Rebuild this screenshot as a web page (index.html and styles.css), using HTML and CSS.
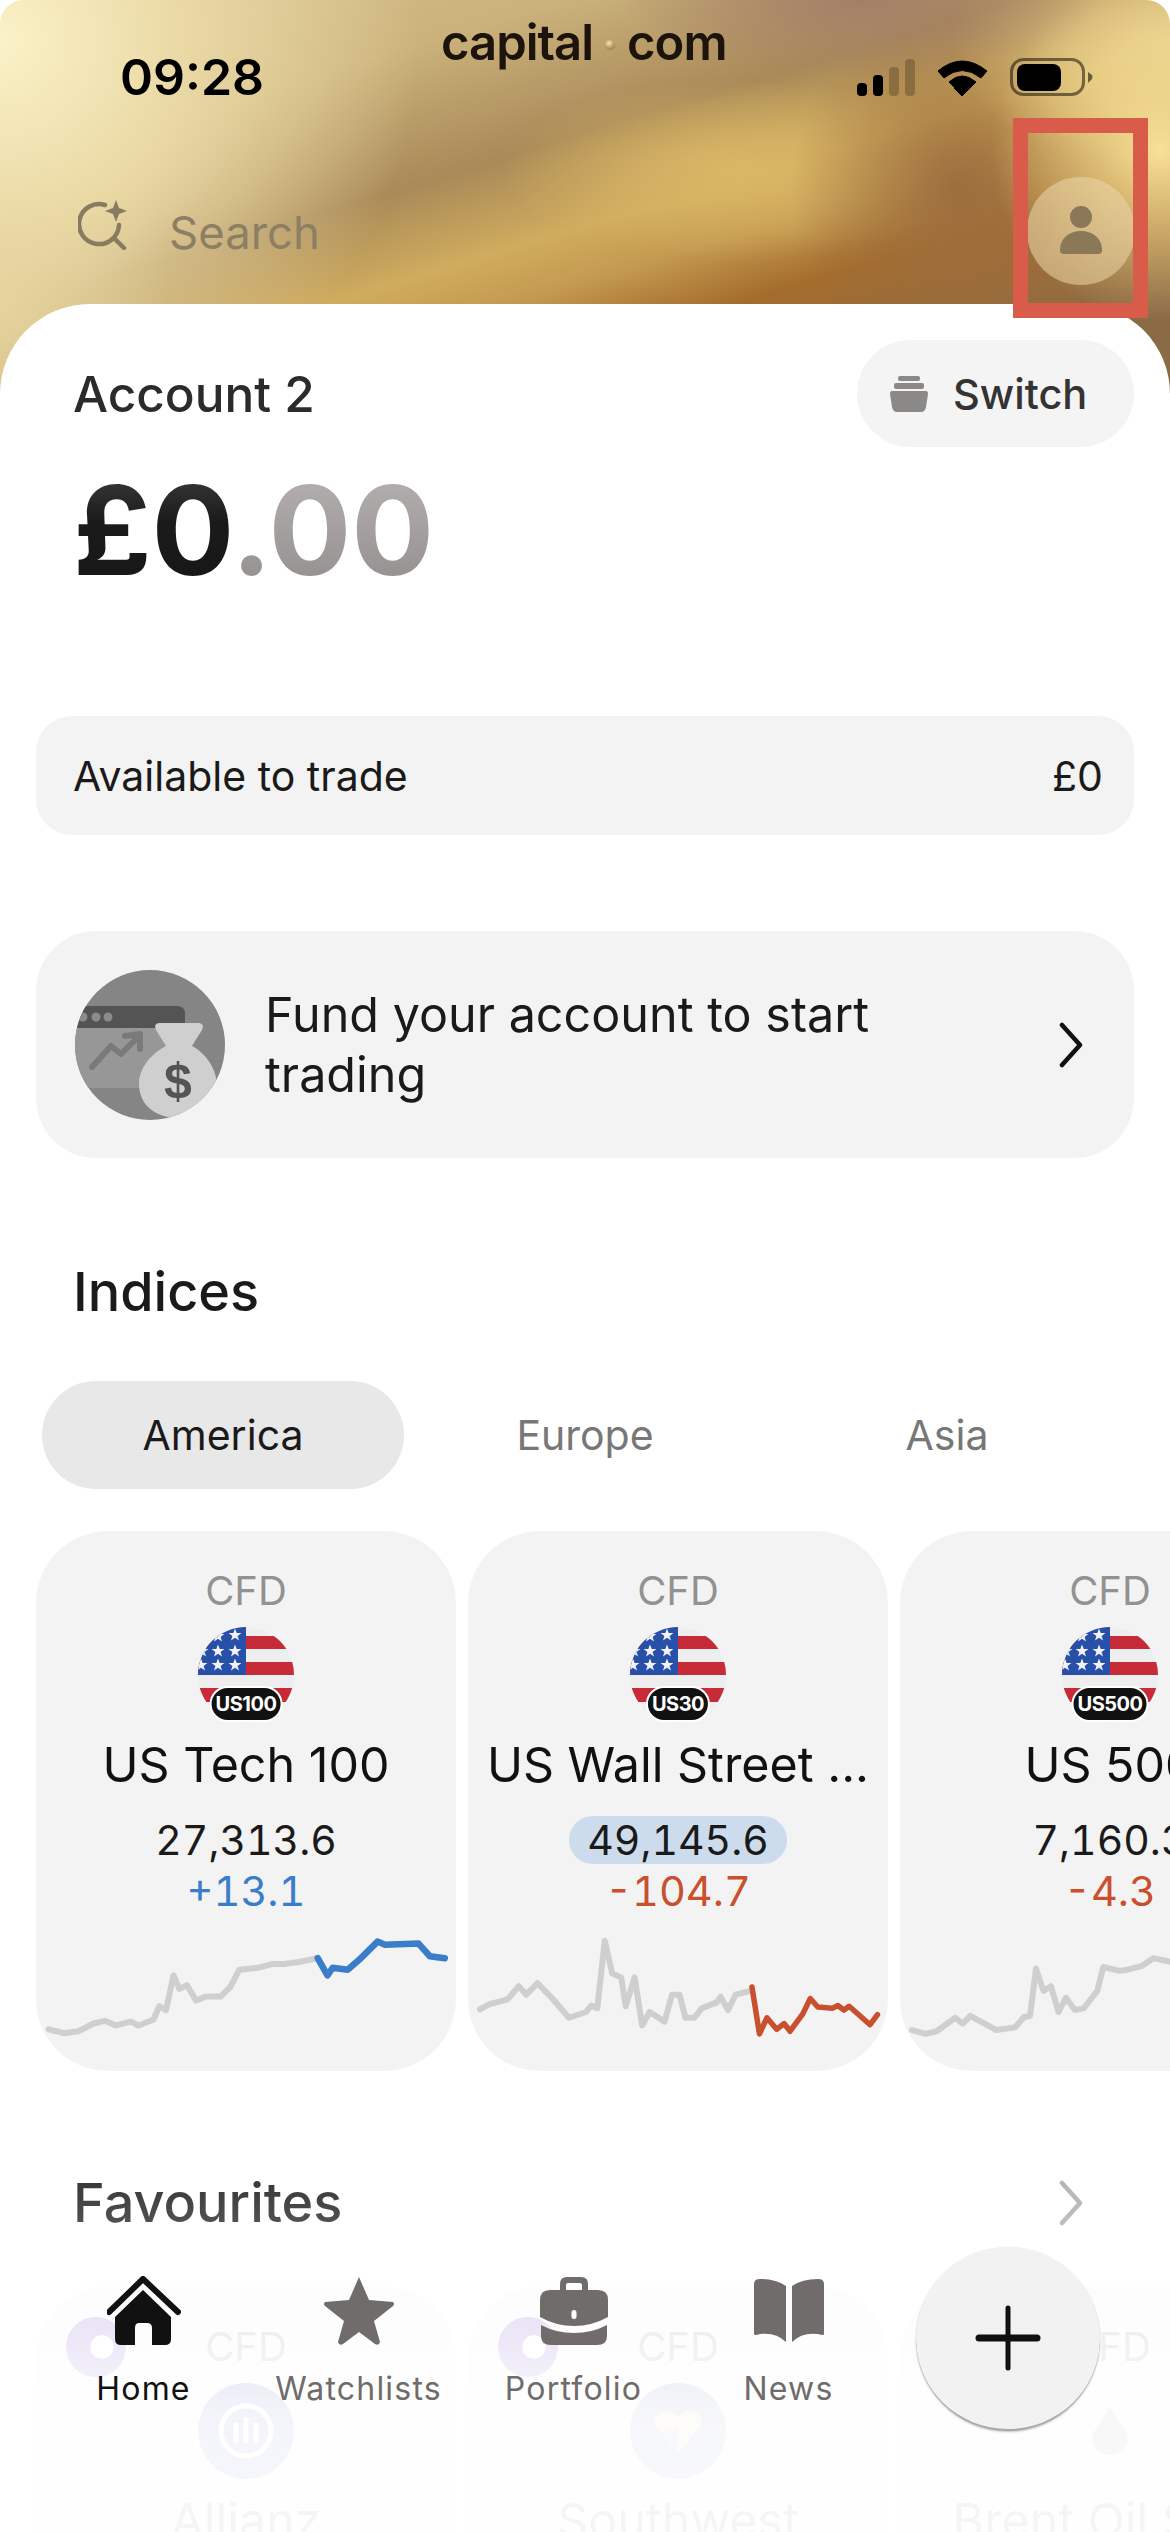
FILE: index.html
```html
<!DOCTYPE html>
<html lang="en">
<head>
    <meta charset="UTF-8">
    <meta name="viewport" content="width=device-width, initial-scale=1.0">
    <title>Capital.com</title>
    <link rel="stylesheet" href="styles.css">
</head>
<body>
    <svg class="defs" width="0" height="0">
        <defs>
            <polygon id="star" points="0,-6.5 1.7,-2 6.4,-2 2.6,0.9 4,5.5 0,2.8 -4,5.5 -2.6,0.9 -6.4,-2 -1.7,-2"/>
            <clipPath id="flag-clip"><circle cx="48" cy="48" r="48"/></clipPath>
            <clipPath id="fund-clip"><circle cx="75" cy="75" r="75"/></clipPath>
            <symbol id="flag" viewBox="0 0 96 96">
                <g clip-path="url(#flag-clip)">
                    <rect width="96" height="96" fill="#eeeef0"/>
                    <rect y="9" width="96" height="13" fill="#c62b37"/>
                    <rect y="35" width="96" height="13" fill="#c62b37"/>
                    <rect y="61" width="96" height="14" fill="#c62b37"/>
                    <rect width="48" height="48" fill="#2850a8"/>
                    <g fill="#f2f3f8">
                        <use href="#star" x="20" y="9"/>
                        <use href="#star" x="37" y="8"/>
                        <use href="#star" x="20" y="24"/>
                        <use href="#star" x="37" y="24"/>
                        <use href="#star" x="4" y="24"/>
                        <use href="#star" x="3" y="38"/>
                        <use href="#star" x="20" y="38"/>
                        <use href="#star" x="37" y="38"/>
                    </g>
                </g>
            </symbol>
        </defs>
    </svg>

    <div class="screen">
        <!-- status bar -->
        <div class="status">
            <span class="time">09:28</span>
            <span class="logo">capital<i class="logo-dot"></i>com</span>
            <svg class="status-icons" width="236" height="40" viewBox="0 0 236 40">
                <rect x="0" y="25" width="10" height="13" rx="4" fill="#000"/>
                <rect x="16" y="17" width="10" height="21" rx="4" fill="#000"/>
                <rect x="32" y="9" width="10" height="29" rx="4" fill="#000" opacity=".22"/>
                <rect x="48" y="1" width="10" height="37" rx="4" fill="#000" opacity=".22"/>
                <path d="M81 13 Q105 -7 130 13 L124 20 Q105 5 87 20 Z M92 24 Q105 12 119 24 L113 30 Q105 23 98 30 Z M105 38 L97 30 Q105 24 113 30 Z" fill="#000" stroke="#000" stroke-linejoin="round"/>
                <rect x="154.500" y="1.500" width="72" height="35" rx="12" fill="none" stroke="#000" stroke-opacity=".5" stroke-width="3"/>
                <rect x="160" y="6" width="44" height="27" rx="8" fill="#000"/>
                <path d="M231 14 L235 17 Q236 19 235 21 L231 25 Z" fill="#000" fill-opacity=".55"/>
            </svg>
        </div>

        <!-- search -->
        <div class="search">
            <svg class="search-icon" width="50" height="50" viewBox="0 0 50 50" fill="none" stroke="#877b60" stroke-width="4.500" stroke-linecap="round">
                <path d="M27 5 A20 20 0 1 0 41 25"/>
                <path d="M36 38 L46 48"/>
                <path d="M38 0 L41 8 L49 11 L41 14 L38 22 L35 14 L27 11 L35 8 Z" fill="#877b60" stroke="none"/>
            </svg>
            <span class="search-text">Search</span>
            <div class="avatar">
                <svg width="44" height="50" viewBox="0 0 44 50" fill="#8a7857">
                    <circle cx="22" cy="11" r="11"/>
                    <path d="M1 44 C1 32 11 25 22 25 C33 25 43 32 43 44 Q43 48 39 48 H5 Q1 48 1 44 Z"/>
                </svg>
            </div>
        </div>
        <div class="red-box"></div>

        <div class="sheet">
            <div class="account-row">
                <span class="account-name">Account 2</span>
                <div class="switch">
                    <svg width="38" height="36" viewBox="0 0 38 36" fill="#8b8888">
                        <rect x="8" y="0" width="22" height="5" rx="2"/>
                        <rect x="4" y="7" width="30" height="6" rx="2"/>
                        <path d="M2 15 H36 Q38 15 38 18 L36 31 Q35 36 31 36 H7 Q3 36 2 31 L0 18 Q0 15 2 15 Z"/>
                    </svg>
                    <span>Switch</span>
                </div>
            </div>

            <div class="balance"><span class="balance-int">£0</span><span class="balance-dec">.00</span></div>

            <div class="available">
                <span>Available to trade</span>
                <span>£0</span>
            </div>

            <div class="fund">
                <svg class="fund-icon" width="150" height="150" viewBox="0 0 150 150">
                    <g clip-path="url(#fund-clip)">
                        <rect width="150" height="150" fill="#858585"/>
                        <rect x="-10" y="58" width="120" height="60" fill="#979797"/>
                        <path d="M-10 36 H102 Q110 36 110 44 V58 H-10 Z" fill="#545454"/>
                        <circle cx="8" cy="47" r="4.500" fill="#8b8b8b"/>
                        <circle cx="21" cy="47" r="4.500" fill="#8b8b8b"/>
                        <circle cx="33" cy="47" r="4.500" fill="#8b8b8b"/>
                        <path d="M17 97 L36 76 L46 84 L62 68 M50 66 L65 64 L65 79" fill="none" stroke="#7a7a7a" stroke-width="6" stroke-linecap="round" stroke-linejoin="round"/>
                        <path d="M84 53 H124 Q130 54 127 60 L117 76 C132 84 142 100 142 116 C142 136 125 148 103 148 C82 148 64 136 64 114 C64 98 76 84 91 76 L81 60 Q78 54 84 53 Z" fill="#cfcfcf"/>
                        <text class="fund-dollar" x="103" y="128" text-anchor="middle">$</text>
                    </g>
                </svg>
                <span class="fund-text">Fund your account to start trading</span>
                <svg class="chevron" width="26" height="46" viewBox="0 0 26 46" fill="none" stroke="#111" stroke-width="4.500" stroke-linecap="round" stroke-linejoin="round">
                    <path d="M4 3 L22 23 L4 43"/>
                </svg>
            </div>

            <h2 class="section-title">Indices</h2>

            <div class="tabs">
                <span class="tab active">America</span>
                <span class="tab">Europe</span>
                <span class="tab">Asia</span>
            </div>

            <div class="cards">
                <div class="card">
                    <span class="cfd">CFD</span>
                    <div class="flag">
                        <svg width="96" height="96"><use href="#flag"/></svg>
                        <span class="flag-badge">US100</span>
                    </div>
                    <span class="card-name">US Tech 100</span>
                    <span class="price">27,313.6</span>
                    <span class="change up">+13.1</span>
                    <svg class="spark" viewBox="48 1140 562 260" preserveAspectRatio="none">
                        <polyline class="spark-old" points="65,1380 85,1390 105,1385 125,1365 140,1358 155,1370 175,1360 185,1370 205,1355 213,1320 222,1330 232,1240 240,1275 250,1265 262,1305 275,1295 295,1295 308,1270 320,1225 345,1220 355,1215 365,1210 380,1210 400,1205 425,1195"/>
                        <polyline class="spark-up" points="425,1195 438,1240 445,1220 465,1225 480,1200 505,1152 515,1160 560,1157 575,1190 595,1195"/>
                    </svg>
                </div>
                <div class="card">
                    <span class="cfd">CFD</span>
                    <div class="flag">
                        <svg width="96" height="96"><use href="#flag"/></svg>
                        <span class="flag-badge">US30</span>
                    </div>
                    <span class="card-name">US Wall Street ...</span>
                    <span class="price tick">49,145.6</span>
                    <span class="change down">-104.7</span>
                    <svg class="spark" viewBox="627 1140 562 260" preserveAspectRatio="none">
                        <polyline class="spark-old" points="643,1328 655,1315 680,1302 695,1268 705,1290 720,1260 740,1300 762,1350 785,1335 792,1318 800,1325 810,1150 820,1235 832,1245 838,1320 850,1245 860,1370 870,1335 890,1360 900,1290 910,1290 918,1350 930,1350 940,1325 960,1310 965,1295 975,1330 985,1290 1005,1280"/>
                        <polyline class="spark-down" points="1007,1270 1017,1392 1027,1350 1040,1380 1050,1365 1058,1385 1075,1340 1085,1300 1095,1322 1115,1325 1122,1318 1130,1330 1137,1320 1165,1368 1175,1342"/>
                    </svg>
                </div>
                <div class="card">
                    <span class="cfd">CFD</span>
                    <div class="flag">
                        <svg width="96" height="96"><use href="#flag"/></svg>
                        <span class="flag-badge">US500</span>
                    </div>
                    <span class="card-name">US 500</span>
                    <span class="price">7,160.3</span>
                    <span class="change down">-4.3</span>
                    <svg class="spark" viewBox="1206 1140 562 260" preserveAspectRatio="none">
                        <polyline class="spark-old" points="1222,1382 1240,1392 1255,1385 1280,1350 1290,1365 1300,1345 1335,1382 1360,1375 1372,1348 1380,1345 1388,1222 1398,1280 1408,1268 1418,1335 1428,1298 1440,1330 1452,1325 1470,1280 1478,1218 1500,1228 1510,1225 1530,1215 1545,1195 1570,1205"/>
                    </svg>
                </div>
            </div>

            <div class="fav-head">
                <h2 class="section-title">Favourites</h2>
                <svg class="chevron" width="26" height="46" viewBox="0 0 26 46" fill="none" stroke="#aaa" stroke-width="4.500" stroke-linecap="round" stroke-linejoin="round">
                    <path d="M4 3 L22 23 L4 43"/>
                </svg>
            </div>

            <div class="cards">
                <div class="card">
                    <i class="card-mark"></i>
                    <span class="cfd">CFD</span>
                    <div class="fav-logo allianz">
                        <svg width="56" height="56" viewBox="0 0 56 56" fill="none" stroke="#fff" stroke-width="5">
                            <circle cx="28" cy="28" r="25"/>
                            <path d="M18 40 V20 M28 40 V14 M38 40 V20"/>
                        </svg>
                    </div>
                    <span class="card-name">Allianz</span>
                </div>
                <div class="card">
                    <i class="card-mark"></i>
                    <span class="cfd">CFD</span>
                    <div class="fav-logo southwest">
                        <svg width="56" height="56" viewBox="0 0 56 56">
                            <path d="M28 50 L6 24 C0 10 18 2 28 14 C38 2 56 10 50 24 Z" fill="#f0c880"/>
                            <path d="M28 50 L12 30 L28 22 Z" fill="#8090d0"/>
                        </svg>
                    </div>
                    <span class="card-name">Southwest</span>
                </div>
                <div class="card">
                    <span class="cfd">CFD</span>
                    <div class="fav-logo oil">
                        <svg width="38" height="48" viewBox="0 0 38 48" fill="#777">
                            <path d="M19 0 C24 12 37 22 37 32 C37 41 28 48 19 48 C10 48 1 41 1 32 C1 22 14 12 19 0 Z"/>
                        </svg>
                    </div>
                    <span class="card-name">Brent Oil Spot</span>
                </div>
            </div>
        </div>

        <!-- bottom tab bar, lies over the favourites -->
        <div class="tabbar">
            <div class="tabbar-item current">
                <svg width="74" height="70" viewBox="0 0 74 70">
                    <path d="M2 36 L36 3 L71 36" fill="none" stroke="#111" stroke-width="6" stroke-linecap="round" stroke-linejoin="round"/>
                    <path d="M36 14 L64 41 V63 Q64 69 58 69 H45 V52 Q45 47 40 47 H32 Q28 47 28 52 V69 H14 Q8 69 8 63 V41 Z" fill="#111"/>
                </svg>
                <span>Home</span>
            </div>
            <div class="tabbar-item">
                <svg width="74" height="70" viewBox="0 0 74 70">
                    <path d="M37 1 L47 24 L71 26 Q73 28 71 30 L52 45 L58 66 Q57 70 53 68 L37 56 L21 68 Q17 70 16 66 L22 45 L3 30 Q1 28 3 26 L27 24 Z" fill="#6f6c6b"/>
                </svg>
                <span>Watchlists</span>
            </div>
            <div class="tabbar-item">
                <svg width="74" height="70" viewBox="0 0 74 70" fill="#6f6c6b">
                    <path d="M23 16 V8 Q23 1 30 1 H44 Q51 1 51 8 V16 H45 V9 Q45 7 43 7 H31 Q29 7 29 9 V16 Z"/>
                    <path d="M13 14 H61 Q71 14 71 24 V41 Q55 50 37 50 Q19 50 3 41 V24 Q3 14 13 14 Z"/>
                    <path d="M4 49 Q19 57 37 57 Q55 57 70 49 V60 Q70 69 60 69 H14 Q4 69 4 60 Z"/>
                    <rect x="34.500" y="34" width="5" height="9" rx="2.500" fill="#fff"/>
                </svg>
                <span>Portfolio</span>
            </div>
            <div class="tabbar-item">
                <svg width="74" height="70" viewBox="0 0 74 70" fill="#6f6c6b">
                    <path d="M2 8 Q2 3 8 3 Q24 3 34 10 V66 Q24 56 8 58 Q2 60 2 58 Z"/>
                    <path d="M72 8 Q72 3 66 3 Q50 3 40 10 V66 Q50 56 66 58 Q72 60 72 58 Z"/>
                </svg>
                <span>News</span>
            </div>
            <div class="fab">
                <svg width="66" height="66" viewBox="0 0 66 66" stroke="#111" stroke-linecap="round">
                    <path d="M4 33 H62" stroke-width="7"/>
                    <path d="M33 3 V63" stroke-width="5"/>
                </svg>
            </div>
        </div>
    </div>
</body>
</html>
```

FILE: styles.css
```css
* {
    box-sizing: border-box;
}

html, body {
    margin: 0;
    padding: 0;
    background: #fff;
}

body {
    width: 1170px;
    height: 2532px;
    overflow: hidden;
    font-family: Inter, "Liberation Sans", sans-serif;
    color: #1a1a1a;
}

.defs {
    position: absolute;
}

.screen {
    position: relative;
    width: 1170px;
    height: 2532px;
    overflow: hidden;
    border-radius: 24px 24px 0 0;
    background-color: #fff;
    background-repeat: no-repeat;
    background-size: 100% 420px;
    background-image:
        radial-gradient(ellipse 170px 170px at 1160px 150px, #f7e196 0%, rgba(247, 225, 150, 0) 100%),
        radial-gradient(ellipse 240px 80px at 860px 0px, #a47f68 0%, rgba(164, 127, 104, 0) 100%),
        radial-gradient(ellipse 220px 130px at 1170px 40px, #e6cc8c 0%, rgba(230, 204, 140, 0) 100%),
        radial-gradient(ellipse 170px 180px at 960px 190px, #9c6e3e 0%, rgba(156, 110, 62, 0) 100%),
        radial-gradient(ellipse 240px 90px at 740px 170px, #dab766 0%, rgba(218, 183, 102, 0) 100%),
        radial-gradient(ellipse 420px 420px at 0px 40px, #fbf2c8 0%, #e9d8a4 45%, rgba(226, 208, 160, 0) 100%),
        radial-gradient(ellipse 170px 240px at 0px 300px, #dfcc94 0%, rgba(223, 204, 148, 0) 100%),
        linear-gradient(163deg, #d4bf8c 0%, #cbb27c 22%, #a98a58 40%, #d0ac5e 52%, #c49a50 59%, #a46c2c 68%, #8b6b46 85%);
}

/* status bar */
.status {
    position: relative;
    height: 118px;
    padding: 56px 77px 0 120px;
    display: flex;
    justify-content: space-between;
}

.time {
    font-size: 50px;
    font-weight: 600;
    line-height: 42px;
    color: #000;
}

.logo {
    position: absolute;
    top: 13px;
    left: 441px;
    font-size: 49px;
    font-weight: 600;
    line-height: 60px;
    letter-spacing: -1px;
    color: #1c140c;
    display: flex;
    align-items: center;
}

.logo-dot {
    width: 10px;
    height: 10px;
    margin: 4px 12px 0 12px;
    border-radius: 50%;
    background: radial-gradient(circle at 40% 30%, #f4e3b0, #8a5d20);
}

.status-icons {
    margin-top: 2px;
    flex: none;
}

/* search row */
.search {
    height: 186px;
    padding: 59px 36px 0 78px;
    display: flex;
    align-items: flex-start;
}

.search-icon {
    margin-top: 23px;
    flex: none;
}

.search-text {
    margin-left: 41px;
    margin-top: 28px;
    font-size: 45.5px;
    line-height: 56px;
    color: #8d7f63;
    flex: 1;
}

.avatar {
    width: 108px;
    height: 108px;
    margin-right: -1px;
    border-radius: 50%;
    background: rgba(235, 215, 170, 0.55);
    display: flex;
    align-items: center;
    justify-content: center;
}

.red-box {
    position: absolute;
    top: 118px;
    left: 1013px;
    width: 135px;
    height: 200px;
    border: 15px solid #d95b4a;
}

/* white sheet */
.sheet {
    background: #fff;
    border-radius: 90px 90px 0 0;
    padding-top: 36px;
}

.account-row {
    height: 107px;
    padding: 0 36px 0 73px;
    display: flex;
    align-items: center;
    justify-content: space-between;
}

.account-name {
    font-size: 49.5px;
    font-weight: 500;
    color: #2b2b2b;
}

.switch {
    width: 277px;
    height: 107px;
    border-radius: 54px;
    background: #f4f4f4;
    padding-left: 33px;
    display: flex;
    align-items: center;
    gap: 25px;
    font-size: 41.5px;
    font-weight: 500;
    color: #333;
}

.balance {
    margin: 24px 0 0 73px;
    font-size: 123px;
    font-weight: 700;
    line-height: 120px;
}

.balance-int,
.balance-dec {
    background-clip: text;
    -webkit-background-clip: text;
    color: transparent;
}

.balance-int {
    background-image: linear-gradient(180deg, #444 0%, #1a1a1a 45%, #161616 100%);
}

.balance-dec {
    background-image: linear-gradient(180deg, #b8b4b4 0%, #8f8b8b 100%);
}

.available {
    margin: 125px 36px 0;
    height: 119px;
    padding: 0 31px 0 37px;
    border-radius: 36px;
    background: #f3f3f3;
    display: flex;
    align-items: center;
    justify-content: space-between;
    font-size: 41px;
}

.fund {
    margin: 96px 36px 0;
    height: 227px;
    padding: 0 50px 0 39px;
    border-radius: 60px;
    background: #f3f3f3;
    display: flex;
    align-items: center;
}

.fund-icon {
    flex: none;
}

.fund-dollar {
    font-family: "Liberation Sans", sans-serif;
    font-size: 50px;
    font-weight: 700;
    fill: #545454;
}

.fund-text {
    margin: 0 90px 0 40px;
    font-size: 48.5px;
    line-height: 60px;
    flex: 1;
}

.section-title {
    margin: 0;
    font-size: 54px;
    font-weight: 500;
    line-height: 68px;
    color: #1a1a1a;
}

.fund + .section-title {
    margin: 100px 0 0 73px;
}

.tabs {
    margin: 55px 0 0 42px;
    display: flex;
}

.tab {
    width: 362px;
    height: 108px;
    border-radius: 54px;
    display: flex;
    align-items: center;
    justify-content: center;
    font-size: 41px;
    color: #777;
}

.tab.active {
    background: #e8e8e8;
    color: #1a1a1a;
}

/* market cards */
.cards {
    margin: 42px 0 0 36px;
    display: flex;
    gap: 12px;
    overflow: hidden;
}

.card {
    position: relative;
    flex: none;
    width: 420px;
    height: 540px;
    padding-top: 36px;
    border-radius: 72px;
    background: #f3f3f4;
    display: flex;
    flex-direction: column;
    align-items: center;
    white-space: nowrap;
}

.cfd {
    font-size: 40px;
    line-height: 48px;
    color: #929292;
}

.flag {
    position: relative;
    width: 96px;
    height: 96px;
    margin-top: 12px;
}

.flag svg {
    display: block;
}

.flag-badge {
    position: absolute;
    left: 50%;
    top: 59px;
    transform: translateX(-50%);
    padding: 0 4px;
    min-width: 58px;
    height: 36px;
    border: 2px solid #fff;
    border-radius: 18px;
    background: #111;
    color: #fff;
    font-size: 20px;
    font-weight: 700;
    letter-spacing: -0.5px;
    line-height: 32px;
    text-align: center;
}

.card-name {
    margin-top: 11px;
    font-size: 48.4px;
    font-weight: 400;
    line-height: 62px;
    color: #111;
}

.price {
    margin-top: 20px;
    padding: 0 18px;
    font-size: 41px;
    line-height: 48px;
    border-radius: 24px;
    font-variant-numeric: tabular-nums;
}

.price.tick {
    background: #cddcec;
}

.change {
    margin-top: 1px;
    font-size: 41.5px;
    line-height: 52px;
    font-variant-numeric: tabular-nums;
}

.change.up {
    color: #3a7dc9;
}

.change.down {
    color: #c8502e;
}

.spark {
    width: 420px;
    height: 100px;
    margin-top: 20px;
    flex: none;
}

.spark polyline {
    fill: none;
    stroke-linejoin: round;
    stroke-linecap: round;
    vector-effect: non-scaling-stroke;
}

.spark-old {
    stroke: #cfcfcf;
    stroke-width: 6px;
}

.spark-up {
    stroke: #3a7dc9;
    stroke-width: 6.5px;
}

.spark-down {
    stroke: #c8502e;
    stroke-width: 5.5px;
}

.fav-head {
    margin-top: 98px;
    padding: 0 86px 0 73px;
    display: flex;
    align-items: center;
    justify-content: space-between;
}

.fav-head + .cards {
    margin-top: 50px;
}

.card-mark {
    position: absolute;
    top: 30px;
    left: 30px;
    width: 60px;
    height: 60px;
    border-radius: 50%;
    background: radial-gradient(circle at 60% 50%, #fff 0 24%, #7d56c9 26%);
}

.fav-logo {
    width: 96px;
    height: 96px;
    margin-top: 12px;
    border-radius: 50%;
    display: flex;
    align-items: center;
    justify-content: center;
}

.allianz {
    background: #2a3fa8;
}

.southwest {
    background: #5a6ab0;
}

/* bottom tab bar */
.tabbar {
    position: absolute;
    left: 0;
    right: 0;
    top: 2130px;
    height: 402px;
    padding: 146px 0 0 36px;
    display: flex;
    align-items: flex-start;
    background: linear-gradient(180deg, rgba(255, 255, 255, 0) 0%, rgba(255, 255, 255, 0.25) 24%, rgba(255, 255, 255, 0.8) 40%, rgba(255, 255, 255, 0.88) 55%, rgba(255, 255, 255, 0.95) 72%, rgba(255, 255, 255, 0.96) 100%);
}

.tabbar-item {
    width: 215px;
    display: flex;
    flex-direction: column;
    align-items: center;
    color: #6f6c6b;
    font-size: 32px;
    letter-spacing: 1.2px;
    line-height: 40px;
}

.tabbar-item svg {
    display: block;
    margin-bottom: 23px;
}

.tabbar-item.current {
    color: #111;
}

.fab {
    width: 184px;
    height: 184px;
    margin: -29px 0 0 20px;
    border-radius: 50%;
    background: #f2f2f2;
    border-bottom: 2px solid #a9a9a9;
    box-shadow: 0 1px 2px rgba(0, 0, 0, 0.25);
    display: flex;
    align-items: center;
    justify-content: center;
}
```
